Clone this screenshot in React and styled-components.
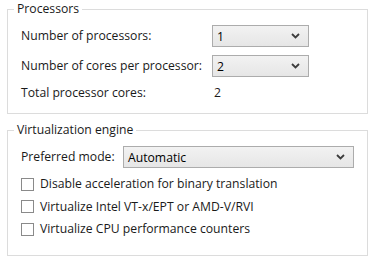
import styled, { createGlobalStyle } from 'styled-components'

const Global = createGlobalStyle`
  html, body { margin: 0; padding: 0; background: #fff; }
  body {
    font-family: "Open Sans", "Noto Sans", "DejaVu Sans", sans-serif;
    font-size: 12.2px;
    color: #1a1a1a;
  }
`

const Page = styled.div`
  width: 383px;
  height: 271px;
  padding: 1px 0 0 7px;
  box-sizing: border-box;
  display: flex;
  flex-direction: column;
  gap: 8px;
`

const Group = styled.fieldset`
  margin: 0;
  width: 361px;
  height: ${({ $h }) => $h}px;
  box-sizing: border-box;
  border: 1px solid #dcdcdc;
  padding: 0 13px 0 13px;
  min-width: 0;
`

const Legend = styled.legend`
  margin-left: -7px;
  padding: 0 3px;
  line-height: 16px;
  height: 16px;
`

const Grid = styled.div`
  display: grid;
  grid-template-columns: 191px 97px;
  row-gap: 8px;
  padding-top: 8px;
  align-items: center;
`

const Label = styled.span`
  line-height: 16px;
  white-space: nowrap;
`

const Value = styled.span`
  line-height: 16px;
  padding-left: 2px;
`

const Select = styled.div`
  height: 22px;
  width: ${({ $w }) => $w}px;
  box-sizing: border-box;
  border: 1px solid #acacac;
  background: linear-gradient(#f2f2f2, #e6e6e6);
  display: flex;
  align-items: center;
  justify-content: space-between;
  padding: 0 8px 0 4px;
  color: #000;
`

const ModeRow = styled.div`
  display: flex;
  align-items: center;
  justify-content: space-between;
  padding-top: 8px;
`

const Checks = styled.div`
  display: flex;
  flex-direction: column;
  gap: 6.5px;
  padding-top: 8px;
`

const CheckRow = styled.label`
  display: flex;
  align-items: center;
  gap: 6px;
  line-height: 16px;
`

const Box = styled.span`
  width: 13px;
  height: 13px;
  box-sizing: border-box;
  border: 1px solid #8a8a8a;
  background: #fff;
`

const Chevron = () => (
  <svg width="9" height="6" viewBox="0 0 9 6">
    <path d="M1 1 L4.5 4.5 L8 1" fill="none" stroke="#3c3c3c" strokeWidth="1.8" />
  </svg>
)

export default function App() {
  return (
    <>
      <Global />
      <Page>
        <Group $h={113}>
          <Legend>Processors</Legend>
          <Grid>
            <Label>Number of processors:</Label>
            <Select $w={97}>1<Chevron /></Select>
            <Label>Number of cores per processor:</Label>
            <Select $w={97}>2<Chevron /></Select>
            <Label>Total processor cores:</Label>
            <Value>2</Value>
          </Grid>
        </Group>
        <Group $h={134}>
          <Legend>Virtualization engine</Legend>
          <ModeRow>
            <Label>Preferred mode:</Label>
            <Select $w={231}>Automatic<Chevron /></Select>
          </ModeRow>
          <Checks>
            <CheckRow><Box />Disable acceleration for binary translation</CheckRow>
            <CheckRow><Box />Virtualize Intel VT-x/EPT or AMD-V/RVI</CheckRow>
            <CheckRow><Box />Virtualize CPU performance counters</CheckRow>
          </Checks>
        </Group>
      </Page>
    </>
  )
}
